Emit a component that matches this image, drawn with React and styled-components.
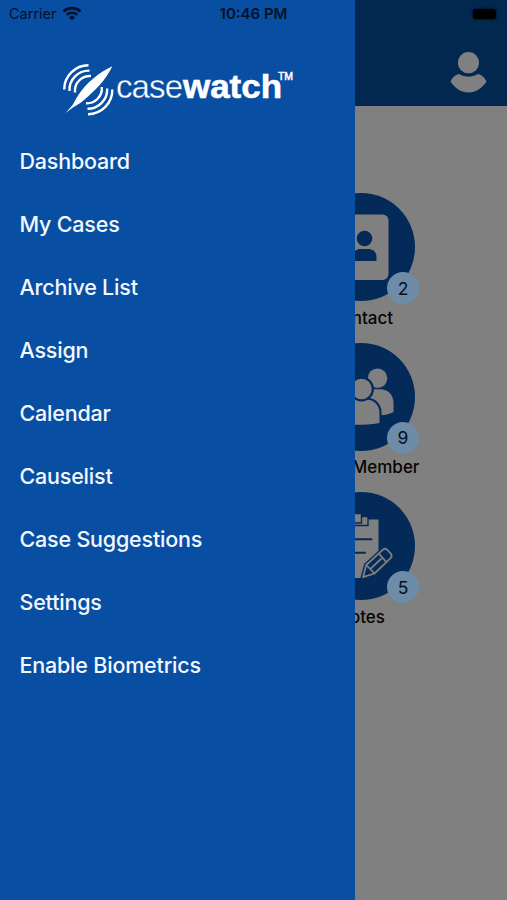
import styled, { createGlobalStyle } from "styled-components";

const BLUE = "#084ea2";

// colours of the page while the drawer is open
const DIM = {
    page: "#808080",
    header: "#032850",
    disc: "#032a59",
    badge: "#6c8ca7",
};

const GlobalStyle = createGlobalStyle`
    body {
        margin: 0;
        font-family: Inter, "Liberation Sans", sans-serif;
    }
`;

const Screen = styled.div`
    position: relative;
    width: 507px;
    height: 900px;
    overflow: hidden;
    background-color: ${DIM.page};
`;

const Header = styled.header`
    height: 106px;
    box-sizing: border-box;
    padding: 50px 20px 0 0;
    background-color: ${DIM.header};

    display: flex;
    justify-content: flex-end;
    align-items: flex-start;
`;

const Tiles = styled.main`
    width: 130px;
    margin-left: 296px;
    padding-top: 87px;

    display: flex;
    flex-direction: column;
    gap: 12.7px;
`;

const Tile = styled.div`
    height: 137px;

    display: flex;
    flex-direction: column;
    align-items: center;
    gap: 5.5px;
`;

const Disc = styled.div`
    position: relative;
    width: 108px;
    height: 108px;
    border-radius: 50%;
    background-color: ${DIM.disc};
`;

const Badge = styled.span`
    position: absolute;
    left: 80px;
    top: 79px;
    width: 32px;
    height: 32px;
    border-radius: 50%;
    background-color: ${DIM.badge};
    color: #05101c;
    font-size: 17.5px;

    display: flex;
    align-items: center;
    justify-content: center;
`;

const TileLabel = styled.span`
    font-size: 17px;
    font-weight: 500;
    line-height: 22px;
    white-space: nowrap;
    color: #050505;
`;

const Drawer = styled.aside`
    position: absolute;
    top: 0;
    left: 0;
    bottom: 0;
    width: 355px;
    background-color: ${BLUE};
`;

const LogoRow = styled.div`
    padding: 60px 0 0 60px;
    height: 69px;
`;

const Menu = styled.nav`
    display: flex;
    flex-direction: column;
`;

const MenuItem = styled.a`
    height: 63.1px;
    padding-left: 19.5px;
    color: #f3f8ff;
    font-size: 21.5px;
    font-weight: 500;
    letter-spacing: -0.2px;

    display: flex;
    align-items: center;
`;

const StatusBar = styled.div`
    position: absolute;
    top: 0;
    left: 0;
    right: 0;
    height: 27px;
    padding: 0 9px;
    color: #021229;
    font-size: 14.5px;

    display: grid;
    grid-template-columns: 1fr auto 1fr;
    align-items: center;
`;

const Carrier = styled.div`
    display: flex;
    align-items: center;
    gap: 5px;
`;

const Clock = styled.span`
    font-size: 15px;
    font-weight: 600;
`;

const Battery = styled.div`
    justify-self: end;
    width: 23px;
    height: 10px;
    margin-right: 2px;
    border-radius: 3px;
    background-color: #000000;
    box-shadow: 0 0 0 1.5px #021c3b;
`;

function WifiIcon() {
    return (
        <svg width="20" height="15" viewBox="0 0 18 14" fill="none">
            <path
                d="M1.2 5.2A11.3 11.3 0 0 1 16.8 5.2"
                stroke="#021229"
                strokeWidth="2.6"
            />
            <path
                d="M4.1 8.3A7 7 0 0 1 13.9 8.3"
                stroke="#021229"
                strokeWidth="2.2"
            />
            <path d="M6.2 10.5A4 4 0 0 1 11.8 10.5L9 13.4Z" fill="#021229" />
        </svg>
    );
}

function ProfileIcon() {
    return (
        <svg width="37" height="44" viewBox="0 0 37 44" fill={DIM.page}>
            <circle cx="18.5" cy="12.7" r="10.6" />
            <path d="M8.8 23.9Q18.5 29.6 28.2 23.9C32 25 35 27.5 36.5 31.6C32 38.5 26 42.5 18.5 42.5S5 38.5 0.5 31.6C2 27.5 5 25 8.8 23.9Z" />
        </svg>
    );
}

function ContactIcon() {
    return (
        <svg width="108" height="108" viewBox="0 0 108 108">
            <rect
                x="26"
                y="21.5"
                width="55.5"
                height="65.5"
                rx="6"
                fill={DIM.page}
            />
            <circle cx="57.5" cy="45.5" r="7.8" fill={DIM.disc} />
            <path
                d="M45.5 68V64C45.5 59 49 56 54 56H61C66 56 69.5 59 69.5 64V68Z"
                fill={DIM.disc}
            />
        </svg>
    );
}

function MembersIcon() {
    return (
        <svg width="108" height="108" viewBox="0 0 108 108" fill={DIM.page}>
            <circle cx="70.5" cy="35.3" r="9.8" />
            <path d="M56 72V52C58 48 62 46.3 67 46.3H73C81 46.3 86.5 52 86.5 60V69C82 71.5 76 72.5 70 72.5Z" />
            <g stroke={DIM.disc} strokeWidth="2.2">
                <path d="M36 81V69C36 60.5 41 55.5 49 55.5H59C68 55.5 73.6 62 73.6 70.5V80.5C66 83.5 44 83.5 36 81Z" />
                <circle cx="54.5" cy="46" r="11.4" />
            </g>
        </svg>
    );
}

function NotesIcon() {
    return (
        <svg width="108" height="108" viewBox="0 0 108 108">
            <path d="M26 27.5H71.5V62L58 75L54.5 86H26Z" fill={DIM.page} />
            <path
                d="M38 33.5V24.5H44V21.5H54.5V24.5H61V33.5Z"
                fill={DIM.page}
                stroke={DIM.disc}
                strokeWidth="1.4"
            />
            <path
                d="M54.5 24.5V31H48"
                fill="none"
                stroke={DIM.disc}
                strokeWidth="1.4"
            />
            <path
                d="M33 47.3H64.5M33 60.8H58"
                stroke={DIM.disc}
                strokeWidth="2"
                strokeLinecap="round"
            />
            <path
                d="M56 85.2L59.3 73L76 57.6Q78.3 55.8 80.5 58L83.8 61.7Q85.6 64 83.6 66.2L67.5 81.5Z"
                fill={DIM.disc}
                stroke={DIM.disc}
                strokeWidth="4.5"
            />
            <g
                fill="none"
                stroke={DIM.page}
                strokeWidth="1.8"
                strokeLinejoin="round"
            >
                <path d="M56 85.2L59.3 73L76 57.6Q78.3 55.8 80.5 58L83.8 61.7Q85.6 64 83.6 66.2L67.5 81.5Z" />
                <path d="M59.3 73L67.5 81.5M71.8 61.6L79.4 70.2M63.2 77.2L74.5 66.5" />
            </g>
        </svg>
    );
}

function Logo() {
    return (
        <svg width="240" height="60" viewBox="60 60 240 60">
            <g fill="none" stroke="#fff" strokeWidth="2.4">
                <path d="M64.2 89.5A24.3 24.3 0 0 1 88.5 65.3" />
                <path d="M69.5 91A19.5 19.5 0 0 1 89.5 70.6" />
                <path d="M75 92.5A15 15 0 0 1 91 76" />
                <path d="M112.3 89.5A24.3 24.3 0 0 1 88 114.2" />
                <path d="M107.2 88.5A19.5 19.5 0 0 1 87.5 108.8" />
                <path d="M101.8 87A15 15 0 0 1 86 103.3" />
            </g>
            <path
                d="M112.3 66.2C99.5 72 86 83 78 95.5C75.5 99.5 74 103 72.2 105.5L65.5 113L73.3 107.2C76 105.3 79.5 103.8 82.8 100.9C94.5 91.5 106.5 79 112.3 66.2Z"
                fill="#fff"
            />
            <text
                x="116"
                y="98"
                textLength="67"
                fill="#fff"
                stroke={BLUE}
                strokeWidth="0.35"
                fontFamily="Liberation Sans, sans-serif"
                fontSize="33"
            >
                case
            </text>
            <text
                x="183"
                y="98"
                textLength="99"
                lengthAdjust="spacingAndGlyphs"
                fill="#fff"
                stroke="#fff"
                strokeWidth="0.6"
                fontFamily="Liberation Sans, sans-serif"
                fontWeight="700"
                fontSize="33.5"
            >
                watch
            </text>
            <text
                x="278"
                y="79.5"
                textLength="15"
                fill="#fff"
                stroke="#fff"
                strokeWidth="0.5"
                fontFamily="Liberation Sans, sans-serif"
                fontSize="10.5"
            >
                TM
            </text>
        </svg>
    );
}

const tiles = [
    { label: "Contact", count: 2, icon: ContactIcon },
    { label: "Team Member", count: 9, icon: MembersIcon },
    { label: "Notes", count: 5, icon: NotesIcon },
];

const menu = [
    "Dashboard",
    "My Cases",
    "Archive List",
    "Assign",
    "Calendar",
    "Causelist",
    "Case Suggestions",
    "Settings",
    "Enable Biometrics",
];

function App() {
    return (
        <Screen>
            <GlobalStyle />
            <Header>
                <ProfileIcon />
            </Header>
            <Tiles>
                {tiles.map(({ label, count, icon: Icon }) => (
                    <Tile key={label}>
                        <Disc>
                            <Icon />
                            <Badge>{count}</Badge>
                        </Disc>
                        <TileLabel>{label}</TileLabel>
                    </Tile>
                ))}
            </Tiles>
            <Drawer>
                <LogoRow>
                    <Logo />
                </LogoRow>
                <Menu>
                    {menu.map((label) => (
                        <MenuItem key={label}>{label}</MenuItem>
                    ))}
                </Menu>
            </Drawer>
            <StatusBar>
                <Carrier>
                    Carrier
                    <WifiIcon />
                </Carrier>
                <Clock>10:46 PM</Clock>
                <Battery />
            </StatusBar>
        </Screen>
    );
}

export default App;
